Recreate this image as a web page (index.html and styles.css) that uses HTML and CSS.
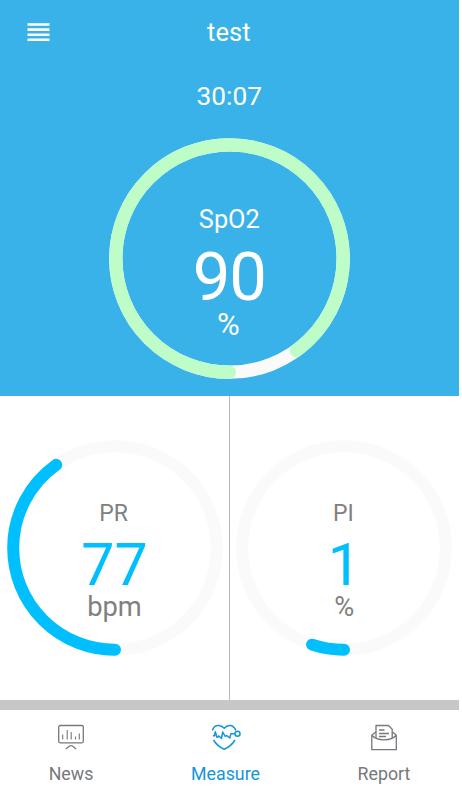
FILE: index.html
```html
<!DOCTYPE html>
<html lang="en">
<head>
    <meta charset="UTF-8">
    <meta name="viewport" content="width=device-width, initial-scale=1.0">
    <title>Measure</title>
    <link rel="stylesheet" href="styles.css">
</head>
<body>
    <div class="app">
        <!-- Blue top area -->
        <div class="top">
            <header class="header">
                <svg class="menu" width="24" height="20" viewBox="0 0 24 20">
                    <path d="M.5 1.500h22M.5 6.600h22M.5 11.700h22M.5 16.800h22"/>
                </svg>
                <h1>test</h1>
            </header>
            <div class="timer">30:07</div>
            <div class="gauge gauge-large">
                <svg viewBox="0 0 241 241">
                    <circle class="track" cx="120.5" cy="120.5" r="113.7"/>
                    <circle class="value" cx="120.5" cy="120.5" r="113.7" pathLength="100" stroke-dasharray="90 100"/>
                </svg>
                <div class="reading">
                    <span class="name">SpO2</span>
                    <span class="number">90</span>
                    <span class="unit">%</span>
                </div>
            </div>
        </div>

        <!-- Pulse rate and perfusion index -->
        <div class="panels">
            <div class="panel">
                <div class="gauge">
                    <svg viewBox="0 0 216 216">
                        <circle class="track" cx="108" cy="108" r="101.8"/>
                        <circle class="value" cx="108" cy="108" r="101.8" pathLength="100" stroke-dasharray="40.2 100"/>
                    </svg>
                    <div class="reading">
                        <span class="name">PR</span>
                        <span class="number">77</span>
                        <span class="unit">bpm</span>
                    </div>
                </div>
            </div>
            <div class="panel">
                <div class="gauge">
                    <svg viewBox="0 0 216 216">
                        <circle class="track" cx="108" cy="108" r="101.8"/>
                        <circle class="value" cx="108" cy="108" r="101.8" pathLength="100" stroke-dasharray="5.1 100"/>
                    </svg>
                    <div class="reading">
                        <span class="name">PI</span>
                        <span class="number">1</span>
                        <span class="unit">%</span>
                    </div>
                </div>
            </div>
        </div>

        <!-- Bottom tabs -->
        <nav class="tabs">
            <a class="tab">
                <svg width="30" height="30" viewBox="0 0 30 30">
                    <rect x="2.7" y="3.5" width="24.6" height="17.3" rx="1.5"/>
                    <path class="thin" d="M6.700 12.500v5M11.200 8v9.500M15.200 10v7.500M19.500 14.500v3M23.300 11.500v6"/>
                    <path d="M9.800 27l3.800-3q1.400-.8 2.800 0l3.800 3"/>
                </svg>
                <span>News</span>
            </a>
            <a class="tab active">
                <svg width="30" height="30" viewBox="0 0 30 30">
                    <path d="M1.500 8.500C3 2.500 9.500 2 13.200 6.200C17 2 22.500 2.500 24.800 8.500M2.500 18C5 22 9 25.500 13.200 27.300C17.500 25.500 21.500 22 24 18"/>
                    <path d="M1.800 13.800h1.700l.7-4 1.800 5.500 2-1.300 2.500 2.500 1.200-6.500 2.500 4.500 1.500-1 3 2.500 1.200-4.300h4"/>
                    <circle cx="26.500" cy="11.700" r="2.500"/>
                </svg>
                <span>Measure</span>
            </a>
            <a class="tab">
                <svg width="30" height="30" viewBox="0 0 30 30">
                    <path d="M2.800 13v14.700h24.500V13M2.800 13l4-3M27.300 13l-4-3M2.800 13c5 6.500 19.500 6.500 24.500 0"/>
                    <path d="M7 16V3.500h12.500l3.700 3.700v8.800M10 8h5.500M10 11.500h10M10 14.500h7"/>
                </svg>
                <span>Report</span>
            </a>
        </nav>
    </div>
</body>
</html>
```

FILE: styles.css
```css
* {
    box-sizing: border-box;
}

body {
    margin: 0;
    background-color: #fff;
    font-family: Roboto, "Liberation Sans", sans-serif;
}

.app {
    width: 458.6px;
    height: 800px;
    overflow: hidden;
}

.top {
    height: 395.5px;
    background-color: #39b2ea;
    color: #fff;
    text-align: center;
}

.header {
    display: grid;
    grid-template-columns: 64px 1fr 65px;
    align-items: center;
    height: 64px;
}

.header h1 {
    margin: 0;
    font-size: 25.5px;
    font-weight: normal;
    line-height: 65px;
}

.menu {
    margin-left: 27px;
    fill: none;
    stroke: #fff;
    stroke-width: 2.6;
}

.timer {
    height: 66px;
    font-size: 26.3px;
    line-height: 64px;
}

.gauge {
    display: grid;
    width: 216px;
    height: 216px;
    color: #808080;
}

.gauge > * {
    grid-area: 1 / 1;
}

.gauge svg {
    width: 100%;
    height: 100%;
    fill: none;
    stroke-width: 12;
    transform: rotate(90deg);
}

.track {
    stroke: #fafafa;
}

.value {
    stroke: #00bfff;
    stroke-linecap: round;
}

.reading {
    display: flex;
    flex-direction: column;
    align-items: center;
    padding-top: 56px;
}

.name {
    margin-bottom: 6px;
    padding-right: 2px;
    font-size: 23px;
    line-height: 36px;
}

.number {
    color: #00bfff;
    font-size: 59px;
    line-height: 53px;
}

.unit {
    font-size: 27.3px;
    line-height: 32px;
}

.gauge-large {
    width: 241px;
    height: 241px;
    margin: 8px auto 0;
    color: #fff;
}

.gauge-large svg {
    stroke-width: 13.3;
}

.gauge-large .value {
    stroke: #bffdc8;
}

.gauge-large .reading {
    padding-top: 64px;
}

.gauge-large .name {
    margin-bottom: 9px;
    padding: 0;
    font-size: 25.3px;
}

.gauge-large .number {
    color: #fff;
    font-size: 67px;
    letter-spacing: -1px;
    line-height: 61px;
}

.gauge-large .unit {
    padding-right: 2px;
    font-size: 31px;
    line-height: 34px;
}

.panels {
    display: grid;
    grid-template-columns: 230px 1fr;
    height: 304.5px;
}

.panel {
    display: flex;
    justify-content: center;
    padding-top: 44.5px;
}

.panel:first-child {
    border-right: 1px solid #b8b8b8;
}

.tabs {
    display: grid;
    grid-template-columns: 142px 167px 150px;
    border-top: 10px solid #c7c7c7;
    height: 100px;
}

.tab {
    display: flex;
    flex-direction: column;
    align-items: center;
    padding-top: 12px;
    color: #77777d;
    font-size: 17.8px;
    line-height: 24px;
}

.tab svg {
    margin-bottom: 10px;
    fill: none;
    stroke: currentColor;
    stroke-width: 1.3;
    stroke-linejoin: round;
}

.tab .thin {
    stroke-width: 1.1;
}

.tab.active {
    color: #1296db;
}

.tab.active svg {
    stroke-width: 1.5;
}
```
